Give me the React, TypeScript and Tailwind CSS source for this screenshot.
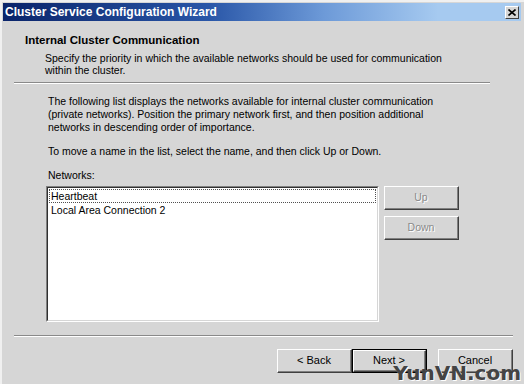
const font = { fontFamily: '"Liberation Sans", Arial, sans-serif' };

function WinButton({
  label,
  disabled,
  isDefault,
}: {
  label: string;
  disabled?: boolean;
  isDefault?: boolean;
}) {
  const inner = (
    <div className="h-full w-full border-t border-l border-t-white border-l-white border-r border-b border-r-[#404040] border-b-[#404040]">
      <div className="h-full w-full border-r border-b border-r-[#808080] border-b-[#808080] flex items-center justify-center">
        {disabled ? (
          <span className="text-[#8a8a8a] [text-shadow:1px_1px_0_#ffffff]">{label}</span>
        ) : (
          <span className="text-black">{label}</span>
        )}
      </div>
    </div>
  );
  if (isDefault) {
    return <div className="w-[75px] h-[24px] border border-black">{inner}</div>;
  }
  return <div className="w-[75px] h-[24px]">{inner}</div>;
}

export default function App() {
  return (
    <div
      className="relative w-[524px] h-[384px] overflow-hidden bg-[#d6d6d6] text-[10.5px] text-black border-l-2 border-t-2 border-l-[#f0f0f0] border-t-[#f0f0f0]"
      style={font}
    >
      {/* title bar */}
      <div className="mt-[1px] ml-[1px] mr-[3px] h-[18px] flex items-center justify-between pl-[2px] pr-[2px] bg-[linear-gradient(90deg,#0a246a_0%,#2a57a8_40%,#6d9ad8_62%,#a6caf0_84%,#a6caf0_100%)]">
        <span className="text-white font-bold text-[12px]">
          Cluster Service Configuration Wizard
        </span>
        <div className="w-[14px] h-[13px] bg-[#d6d6d6] border-t border-l border-white border-r border-b border-r-[#404040] border-b-[#404040] flex items-center justify-center">
          <svg width="8" height="7" viewBox="0 0 8 7">
            <path d="M0.5 0.5 L7.5 6.5 M7.5 0.5 L0.5 6.5" stroke="black" strokeWidth="1.6" />
          </svg>
        </div>
      </div>

      {/* header */}
      <div className="pl-[23px] mt-[12px] leading-[14px] font-bold text-[11.5px]">
        Internal Cluster Communication
      </div>
      <div className="pl-[43px] mt-[5px] leading-[12px]">
        <div>Specify the priority in which the available networks should be used for communication</div>
        <div>within the cluster.</div>
      </div>
      <div className="ml-[12px] w-[476px] mt-[6px] border-t border-b border-t-[#8a8a8a] border-b-white" />

      {/* body */}
      <div className="pl-[46px] mt-[11px] leading-[13px]">
        <div>The following list displays the networks available for internal cluster communication</div>
        <div>(private networks). Position the primary network first, and then position additional</div>
        <div>networks in descending order of importance.</div>
        <div className="mt-[11px]">To move a name in the list, select the name, and then click Up or Down.</div>
        <div className="mt-[11px]">Networks:</div>
      </div>

      <div className="flex pl-[44px] mt-[4px] gap-[5px]">
        <div className="w-[333px] h-[136px] border-t border-l border-t-[#808080] border-l-[#808080] border-r border-b border-r-white border-b-white">
          <div className="h-full w-full bg-white border-t border-l border-t-[#303030] border-l-[#303030] border-r border-b border-r-[#d6d6d6] border-b-[#d6d6d6] p-[1px] leading-[13px]">
            <div className="border border-dotted border-[#505050] pl-[1px] h-[14px] leading-[12px]">Heartbeat</div>
            <div className="pl-[2px] mt-[1px]">Local Area Connection 2</div>
          </div>
        </div>
        <div className="flex flex-col gap-[6px]">
          <WinButton label="Up" disabled />
          <WinButton label="Down" disabled />
        </div>
      </div>

      <div className="ml-[12px] w-[499px] mt-[13px] border-t border-b border-t-[#8a8a8a] border-b-white" />

      <div className="flex pl-[275px] mt-[12px] text-[11px]">
        <WinButton label="< Back" />
        <WinButton label="Next >" isDefault />
        <div className="ml-[11px]">
          <WinButton label="Cancel" />
        </div>
      </div>

      {/* watermark */}
      <div
        className="absolute right-[3px] bottom-[1px] text-[20px] font-bold text-[#444444] leading-none [text-shadow:1px_1px_0_#ffffff]"
        style={{ fontFamily: '"DejaVu Sans", sans-serif' }}
      >
        YunVN.com
      </div>
    </div>
  );
}
